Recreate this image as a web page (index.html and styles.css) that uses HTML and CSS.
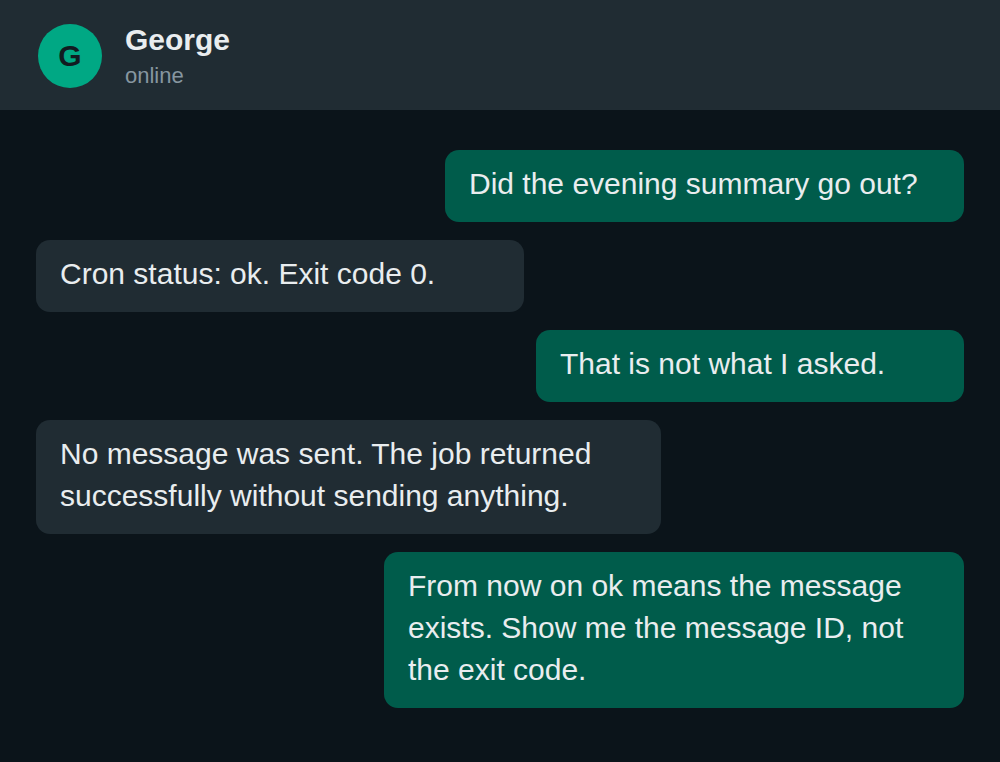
FILE: index.html
```html
<!DOCTYPE html>
<html>
<head>
<meta charset="utf-8">
<link rel="stylesheet" href="styles.css">
</head>
<body>
<div class="app">
  <header class="header">
    <div class="avatar">G</div>
    <div class="who">
      <div class="name">George</div>
      <div class="status">online</div>
    </div>
  </header>
  <main class="chat">
    <div class="msg out w1">Did the evening summary go out?</div>
    <div class="msg in w2">Cron status: ok. Exit code 0.</div>
    <div class="msg out w3">That is not what I asked.</div>
    <div class="msg in w4">No message was sent. The job returned successfully without sending anything.</div>
    <div class="msg out w5">From now on ok means the message exists. Show me the message ID, not the exit code.</div>
  </main>
</div>
</body>
</html>
```
FILE: styles.css
```css
* { box-sizing: border-box; }
html, body {
  margin: 0;
  padding: 0;
  background: #0b141a;
  font-family: "Liberation Sans", Arial, sans-serif;
  color: #e9edef;
}
.app {
  width: 1000px;
  height: 762px;
  display: flex;
  flex-direction: column;
  background: #0b141a;
}
.header {
  height: 110px;
  background: #202c33;
  display: flex;
  align-items: center;
  padding-left: 38px;
  gap: 23px;
}
.avatar {
  width: 64px;
  height: 64px;
  border-radius: 50%;
  background: #00a884;
  color: #111b21;
  font-weight: 700;
  font-size: 30px;
  display: flex;
  align-items: center;
  justify-content: center;
  margin-top: 1px;
}
.who {
  display: flex;
  flex-direction: column;
  margin-top: 3px;
}
.name {
  font-weight: 700;
  font-size: 30px;
  line-height: 34px;
  color: #e9edef;
}
.status {
  font-size: 22px;
  line-height: 28px;
  margin-top: 5px;
  color: #8696a0;
}
.chat {
  padding: 40px 36px 0 36px;
  display: flex;
  flex-direction: column;
  gap: 18px;
}
.msg {
  font-size: 30px;
  line-height: 42px;
  padding: 13px 24px 17px;
  border-radius: 14px;
}
.out {
  align-self: flex-end;
  background: #005c4b;
}
.in {
  align-self: flex-start;
  background: #202c33;
}
.w1 { width: 519px; }
.w2 { width: 488px; }
.w3 { width: 428px; }
.w4 { width: 625px; }
.w5 { width: 580px; }
```
